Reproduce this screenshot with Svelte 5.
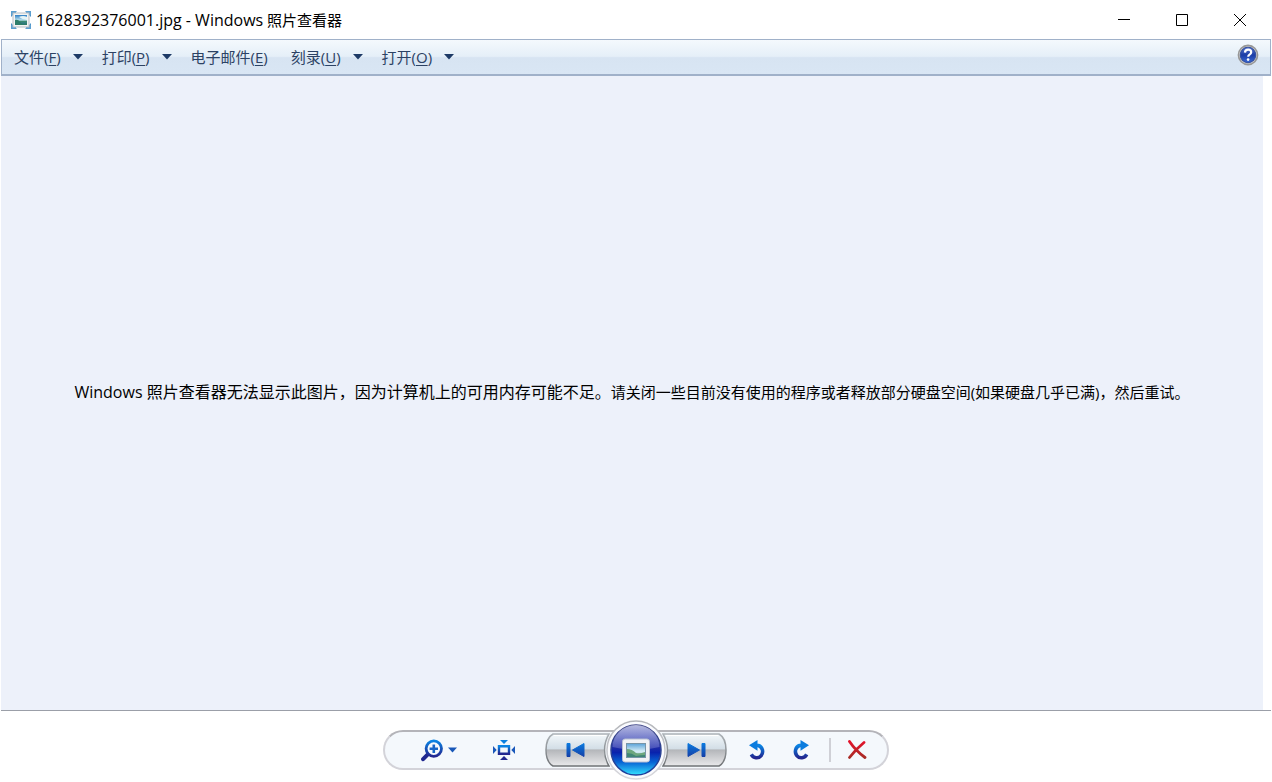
<script lang="ts">
  interface Menu {
    label: string;
    key: string;
    caret: boolean;
  }

  const fileName = "1628392376001.jpg";

  const menus: Menu[] = [
    { label: "文件", key: "F", caret: true },
    { label: "打印", key: "P", caret: true },
    { label: "电子邮件", key: "E", caret: false },
    { label: "刻录", key: "U", caret: true },
    { label: "打开", key: "O", caret: true },
  ];
</script>

<svelte:head>
  <title>{fileName} - Windows 照片查看器</title>
</svelte:head>

<div class="window">
  <header class="titlebar">
    <svg class="app-icon" width="22" height="20" viewBox="0 0 22 20" aria-hidden="true">
      <defs>
        <linearGradient id="appSky" x2="0" y2="1">
          <stop offset="0" stop-color="#2f7fc4" />
          <stop offset="0.5" stop-color="#b9e0ee" />
          <stop offset="0.65" stop-color="#3c8a72" />
          <stop offset="1" stop-color="#256f9e" />
        </linearGradient>
      </defs>
      <path d="M1 1h6l-6 6zM21 1h-6l6 6zM1 19h6l-6-6zM21 19h-6l6-6z" fill="#4b93c9" />
      <path d="M1 1h5v4H1zM16 1h5v4h-5zM1 15h5v4H1zM16 15h5v4h-5z" fill="#5b9fd0" />
      <rect x="3" y="3" width="16" height="14" fill="#f4f4f2" stroke="#b5bdc4" />
      <rect x="5" y="5" width="12" height="10" fill="url(#appSky)" />
      <path d="M5 10q3-1 5 2t7 1v2H5z" fill="#2f7d6a" />
      <path d="M9 7q4-2 8 0v3q-4 0-8-3z" fill="#e6f4f6" />
    </svg>
    <h1><span class="latin">{fileName} - Windows</span> 照片查看器</h1>
    <div class="captions">
      <button aria-label="最小化">
        <svg width="12" height="12" viewBox="0 0 12 12"><path d="M0 5.5h12" /></svg>
      </button>
      <button aria-label="最大化">
        <svg width="12" height="12" viewBox="0 0 12 12"><path d="M.5.5h11v11H.5z" /></svg>
      </button>
      <button aria-label="关闭">
        <svg width="12" height="12" viewBox="0 0 12 12"><path d="M0 0l12 12M12 0L0 12" /></svg>
      </button>
    </div>
  </header>

  <nav class="menubar">
    {#each menus as menu (menu.key)}
      <button class="menu" class:plain={!menu.caret}>
        <span>{menu.label}(<u>{menu.key}</u>)</span>
        {#if menu.caret}
          <svg width="10" height="6" viewBox="0 0 10 6"><path d="M0 0h10L5 5.5z" fill="#1d3a66" /></svg>
        {/if}
      </button>
    {/each}
    <button class="help" aria-label="帮助">
      <svg width="22" height="22" viewBox="0 0 20 20">
        <defs>
          <linearGradient id="helpBlue" x2="0" y2="1">
            <stop offset="0" stop-color="#5a78cf" />
            <stop offset="0.5" stop-color="#1c3da6" />
            <stop offset="1" stop-color="#3a6ad6" />
          </linearGradient>
        </defs>
        <circle cx="10" cy="10" r="8.7" fill="#d5d5d5" stroke="#979797" stroke-width="1.5" />
        <circle cx="10" cy="10" r="7" fill="url(#helpBlue)" stroke="#3450a0" />
        <path d="M7.2 7.8q.2-2.6 2.9-2.6 2.8 0 2.8 2.3 0 1.3-1.5 2.2-1.2.7-1.2 2" fill="none" stroke="#fff" stroke-width="2" />
        <circle cx="10.1" cy="14.2" r="1.2" fill="#fff" />
      </svg>
    </button>
  </nav>

  <main class="stage">
    <p>
      <span class="reason">Windows 照片查看器无法显示此图片，因为计算机上的可用内存可能不足。</span><span>请关闭一些目前没有使用的程序或者释放部分硬盘空间(如果硬盘几乎已满)，然后重试。</span>
    </p>
  </main>

  <footer class="controls">
    <div class="pill">
      <svg class="defs" width="0" height="0" aria-hidden="true">
        <defs>
          <linearGradient id="glyph" x2="0" y2="1">
            <stop offset="0" stop-color="#0a84e4" />
            <stop offset="1" stop-color="#22268f" />
          </linearGradient>
          <linearGradient id="metal" x2="0" y2="1">
            <stop offset="0" stop-color="#f3f8fb" />
            <stop offset="0.46" stop-color="#d3dee6" />
            <stop offset="0.5" stop-color="#b4b6ba" />
            <stop offset="1" stop-color="#e9e9eb" />
          </linearGradient>
          <linearGradient id="metalEdge" x2="0" y2="1">
            <stop offset="0" stop-color="#adb3b8" />
            <stop offset="1" stop-color="#6f7275" />
          </linearGradient>
          <linearGradient id="arrow" x2="0" y2="1">
            <stop offset="0" stop-color="#0b7ade" />
            <stop offset="1" stop-color="#1440a8" />
          </linearGradient>
        </defs>
      </svg>

      <div class="side left">
        <button class="zoom" aria-label="更改显示大小">
          <svg width="23" height="23" viewBox="0 0 23 23">
            <path d="M7.3 14.8l-5.2 5.4" stroke="#20288f" stroke-width="4" stroke-linecap="round" />
            <circle cx="12.8" cy="9.6" r="7.7" fill="#f6fafd" stroke="url(#glyph)" stroke-width="2.8" />
            <path d="M11.5 5.5h2.6v2.9H17V11h-2.9v2.9h-2.6V11H8.6V8.4h2.9z" fill="#1765c6" />
          </svg>
          <svg width="9" height="6" viewBox="0 0 9 6"><path d="M0 .5h9L4.5 5.5z" fill="#1857b8" /></svg>
        </button>
        <button class="fit" aria-label="按窗口大小显示">
          <svg width="22" height="20" viewBox="0 0 22 20">
            <path d="M6 6.3h10v7.4H6z" fill="none" stroke="url(#glyph)" stroke-width="2.4" />
            <path d="M7 0h8l-4 4z" fill="#0b80e0" />
            <path d="M7 20h8l-4-4z" fill="#22288f" />
            <path d="M0 6L3.7 10 0 14zM22 6L18.3 10l3.7 4z" fill="#1a58ba" />
          </svg>
        </button>
      </div>

      <div class="transport">
        <button aria-label="上一个">
          <svg width="65" height="34" viewBox="0 0 65 34">
            <path d="M8 1H64A31 31 0 0 0 64 33H8Q1 29 1 17T8 1z" fill="url(#metal)" stroke="url(#metalEdge)" stroke-width="1.5" />
            <path d="M9 2.5H61" stroke="#fff" />
            <path d="M22 10.5h3v13h-3zM39 10.5v13L27.500 17z" fill="url(#arrow)" stroke="url(#arrow)" stroke-linejoin="round" />
          </svg>
        </button>
        <button class="play" aria-label="放映幻灯片">
          <svg width="60" height="60" viewBox="0 0 60 60">
            <defs>
              <linearGradient id="orb" x2="0" y2="1">
                <stop offset="0" stop-color="#4b55b5" />
                <stop offset="0.45" stop-color="#1f2ba6" />
                <stop offset="0.55" stop-color="#0922ad" />
                <stop offset="0.75" stop-color="#0867d6" />
                <stop offset="1" stop-color="#35e2ff" />
              </linearGradient>
              <linearGradient id="gloss" x2="0" y2="1">
                <stop offset="0" stop-color="#fff" stop-opacity="0.6" />
                <stop offset="1" stop-color="#b0b7f0" stop-opacity="0.25" />
              </linearGradient>
              <linearGradient id="orbEdge" x2="0" y2="1">
                <stop offset="0" stop-color="#3d4489" />
                <stop offset="1" stop-color="#1b3f9d" />
              </linearGradient>
              <linearGradient id="ring" x2="0" y2="1">
                <stop offset="0" stop-color="#b3b5b9" />
                <stop offset="1" stop-color="#d8d8dd" />
              </linearGradient>
              <linearGradient id="photo" x2="0" y2="1">
                <stop offset="0" stop-color="#5aa2d8" />
                <stop offset="0.55" stop-color="#d5edf5" />
                <stop offset="1" stop-color="#9bc5d3" />
              </linearGradient>
            </defs>
            <circle cx="30" cy="30" r="29" fill="#fafbfe" stroke="url(#ring)" stroke-width="1.5" />
            <circle cx="30" cy="30" r="25" fill="url(#orb)" stroke="url(#orbEdge)" stroke-width="1.5" />
            <path d="M6.5 27a23.5 22 0 0 1 47 0Q42 30 30 30T6.500 27z" fill="url(#gloss)" />
            <rect x="16.500" y="19" width="27" height="23" rx="2.500" fill="#f1f2f5" stroke="#b9c0d2" />
            <rect x="20.500" y="23.500" width="19" height="14" fill="url(#photo)" stroke="#7795a8" />
            <path d="M21 29q5 0 9 4 4 1 9-1v5H21z" fill="#6da77e" />
            <path d="M21 33q5 0 9 3 5-1 9-1v2H21z" fill="#3f8576" />
          </svg>
        </button>
        <button aria-label="下一个">
          <svg width="65" height="34" viewBox="0 0 65 34">
            <path d="M57 1H1A31 31 0 0 1 1 33H57Q64 29 64 17T57 1z" fill="url(#metal)" stroke="url(#metalEdge)" stroke-width="1.5" />
            <path d="M4 2.500H56" stroke="#fff" />
            <path d="M43 10.500h-3v13h3zM26 10.500v13L37.500 17z" fill="url(#arrow)" stroke="url(#arrow)" stroke-linejoin="round" />
          </svg>
        </button>
      </div>

      <div class="side right">
        <button aria-label="逆时针旋转">
          <svg width="18" height="22" viewBox="0 0 18 22">
            <path d="M7 6.500h2.500a6 6.300 0 1 1-7.200 8.900" fill="none" stroke="url(#glyph)" stroke-width="3.500" />
            <path d="M0 6.300L8.500 1v10.800z" fill="#0b7cde" />
          </svg>
        </button>
        <button aria-label="顺时针旋转">
          <svg width="18" height="22" viewBox="0 0 18 22">
            <path d="M11 6.500H8.500a6 6.300 0 1 0 7.200 8.900" fill="none" stroke="url(#glyph)" stroke-width="3.500" />
            <path d="M18 6.300L9.500 1v10.800z" fill="#0b7cde" />
          </svg>
        </button>
        <span class="divider"></span>
        <button aria-label="删除">
          <svg width="20" height="20" viewBox="0 0 20 20">
            <defs>
              <linearGradient id="del" x2="0" y2="1">
                <stop offset="0" stop-color="#e3122b" />
                <stop offset="1" stop-color="#a82c26" />
              </linearGradient>
            </defs>
            <path d="M2.500 1.500q6 9 15.500 16M17 2.500Q9 9 2.500 17.500" fill="none" stroke="url(#del)" stroke-width="2.800" stroke-linecap="round" />
          </svg>
        </button>
      </div>
    </div>
  </footer>
</div>

<style>
  :global(body) {
    margin: 0;
    background: #fff;
  }
  .window {
    min-height: 100vh;
    box-sizing: border-box;
    padding: 0 1px;
    display: flex;
    flex-direction: column;
    font-family: "Open Sans", "Noto Sans CJK SC", sans-serif;
    font-size: 15px;
    color: #000;
  }
  button {
    padding: 0;
    border: 0;
    background: none;
    font: inherit;
    color: inherit;
    display: flex;
    align-items: center;
  }
  svg {
    display: block;
    flex: none;
  }
  .titlebar {
    height: 39px;
    display: flex;
    align-items: center;
    padding: 0 2px 0 9px;
  }
  h1 {
    margin: 0 0 0 4px;
    font-size: 15px;
    line-height: 20px;
    font-weight: 400;
    white-space: nowrap;
  }
  .latin {
    font-size: 16px;
  }
  .captions {
    display: flex;
    align-self: stretch;
    margin-left: auto;
  }
  .captions button {
    width: 58px;
    justify-content: center;
  }
  .captions path {
    fill: none;
    stroke: #000;
  }
  .menubar {
    height: 37px;
    box-sizing: border-box;
    display: flex;
    align-items: center;
    gap: 19px;
    padding: 0 11px 0 12px;
    border: 1px solid #a0b1c9;
    border-bottom-width: 2px;
    background: linear-gradient(#f4f9fd, #e5eff8 48%, #d7e4f2 52%, #d9e6f4);
    color: #2c4264;
  }
  .menu {
    gap: 12px;
    line-height: 20px;
    white-space: nowrap;
  }
  .plain {
    padding-right: 4px;
  }
  .menu u {
    text-underline-offset: 2px;
  }
  .help {
    margin-left: auto;
    padding-bottom: 4px;
  }
  .stage {
    flex: 1;
    display: flex;
    align-items: center;
    justify-content: center;
    margin-right: 8px;
    padding-bottom: 2px;
    background: #edf1fa;
  }
  .stage p {
    margin: 0;
    padding: 0 8px;
    line-height: 24px;
  }
  .reason {
    font-size: 16px;
  }
  .controls {
    display: flex;
    justify-content: center;
    padding: 19px 0 12px;
    border-top: 1px solid #9b9fa8;
  }
  .pill {
    display: grid;
    grid-template-columns: 1fr auto 1fr;
    align-items: center;
    width: 506px;
    height: 40px;
    box-sizing: border-box;
    border: 2px solid #d3d3d9;
    border-top-color: #b4b4b9;
    border-radius: 20px;
    background: #f4f8fc;
  }
  .defs {
    position: absolute;
  }
  .side {
    display: flex;
    align-items: center;
  }
  .left {
    gap: 36px;
    padding-left: 36px;
  }
  .zoom {
    gap: 4px;
  }
  .transport {
    display: flex;
    align-items: center;
  }
  .play {
    margin: -12px -4px;
    z-index: 1;
  }
  .right {
    gap: 20px;
    padding-left: 22px;
  }
  .right button:first-child {
    margin-right: 4px;
  }
  .divider {
    width: 2px;
    height: 24px;
    margin-right: -4px;
    background: #cfd0d6;
  }
</style>
